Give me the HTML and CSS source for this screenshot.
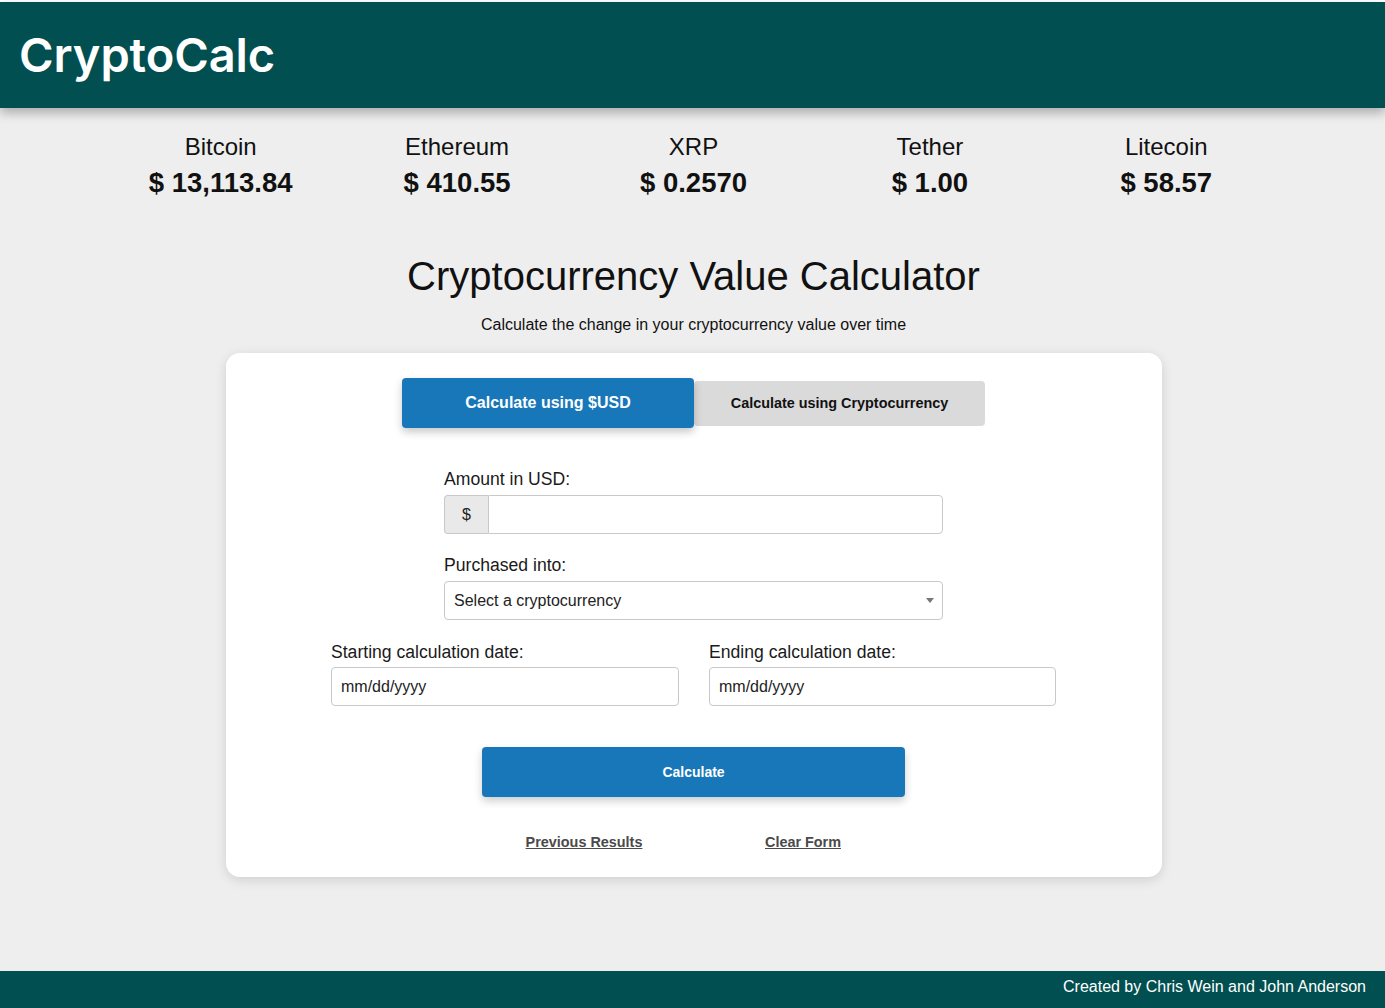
FILE: index.html
```html
<!DOCTYPE html>
<html lang="en">
<head>
<meta charset="utf-8">
<title>CryptoCalc</title>
<link rel="stylesheet" href="styles.css">
</head>
<body>
<div class="page">
  <header class="site-header">
    <h1 class="logo">CryptoCalc</h1>
  </header>

  <div class="content">
    <section class="ticker">
      <div class="coin"><div class="coin-name">Bitcoin</div><div class="coin-price">$ 13,113.84</div></div>
      <div class="coin"><div class="coin-name">Ethereum</div><div class="coin-price">$ 410.55</div></div>
      <div class="coin"><div class="coin-name">XRP</div><div class="coin-price">$ 0.2570</div></div>
      <div class="coin"><div class="coin-name">Tether</div><div class="coin-price">$ 1.00</div></div>
      <div class="coin"><div class="coin-name">Litecoin</div><div class="coin-price">$ 58.57</div></div>
    </section>

    <main class="main">
      <h2 class="title">Cryptocurrency Value Calculator</h2>
      <p class="subtitle">Calculate the change in your cryptocurrency value over time</p>

      <div class="card">
        <div class="tabs">
          <button class="tab tab-active">Calculate using $USD</button>
          <button class="tab tab-inactive">Calculate using Cryptocurrency</button>
        </div>

        <div class="form">
          <div class="field field-narrow">
            <label class="label">Amount in USD:</label>
            <div class="input-group">
              <span class="prefix">$</span>
              <input class="input input-joined" type="text">
            </div>
          </div>

          <div class="field field-narrow">
            <label class="label">Purchased into:</label>
            <div class="select-wrap">
              <select class="input select">
                <option>Select a cryptocurrency</option>
              </select>
            </div>
          </div>

          <div class="date-row">
            <div class="field">
              <label class="label label-date">Starting calculation date:</label>
              <input class="input" type="text" placeholder="mm/dd/yyyy">
            </div>
            <div class="field">
              <label class="label label-date">Ending calculation date:</label>
              <input class="input" type="text" placeholder="mm/dd/yyyy">
            </div>
          </div>
        </div>

        <button class="calc-btn">Calculate</button>

        <div class="links">
          <a class="link" href="#">Previous Results</a>
          <a class="link" href="#">Clear Form</a>
        </div>
      </div>
    </main>
  </div>

  <footer class="site-footer">Created by Chris Wein and John Anderson</footer>
</div>
</body>
</html>
```

FILE: styles.css
```css
* { box-sizing: border-box; }

html, body {
  margin: 0;
  padding: 0;
  background: #ffffff;
}

body {
  font-family: "Liberation Sans", Arial, sans-serif;
  color: #111;
}

.page {
  margin-top: 2px;
  min-height: calc(100vh - 2px);
  background: #eeeeee;
  display: flex;
  flex-direction: column;
}

.site-header {
  height: 106px;
  background: #014f50;
  display: flex;
  align-items: center;
  padding-left: 19px;
  box-shadow: 0 5px 10px rgba(0, 0, 0, 0.28);
  position: relative;
  z-index: 1;
}

.logo {
  margin: 0;
  font-family: Inter, "DejaVu Sans", sans-serif;
  font-weight: 600;
  font-size: 47px;
  line-height: 58px;
  color: #ffffff;
  letter-spacing: -0.1px;
}

.content {
  padding-left: 2px;
}

.ticker {
  width: 1182px;
  margin: 0 auto;
  padding-top: 25px;
  display: grid;
  grid-template-columns: repeat(5, 1fr);
  text-align: center;
}

.coin-name {
  font-size: 24px;
  line-height: 28px;
}

.coin-price {
  margin-top: 6px;
  font-size: 27.5px;
  line-height: 32px;
  font-weight: 700;
}

.main {
  display: flex;
  flex-direction: column;
  align-items: center;
}

.title {
  margin: 54px 0 0;
  font-size: 40px;
  line-height: 46px;
  font-weight: 400;
}

.subtitle {
  margin: 17px 0 0;
  font-size: 16px;
  line-height: 18px;
}

.card {
  margin-top: 19px;
  width: 936px;
  background: #ffffff;
  border-radius: 14px;
  box-shadow: 0 3px 12px rgba(0, 0, 0, 0.13);
  padding: 25px 0 27px;
  display: flex;
  flex-direction: column;
  align-items: center;
}

.tabs {
  display: flex;
  align-items: center;
}

.tab {
  border: none;
  font-family: "Liberation Sans", Arial, sans-serif;
  font-weight: 700;
  cursor: pointer;
  border-radius: 4px;
}

.tab-active {
  width: 292px;
  height: 50px;
  background: #1877b9;
  color: #ffffff;
  font-size: 16px;
  box-shadow: 0 4px 8px rgba(0, 0, 0, 0.22);
  position: relative;
  z-index: 1;
}

.tab-inactive {
  width: 291px;
  height: 45px;
  background: #dadada;
  color: #111;
  font-size: 14.4px;
}

.form {
  margin-top: 41px;
  display: flex;
  flex-direction: column;
  align-items: center;
}

.field {
  display: flex;
  flex-direction: column;
}

.field-narrow {
  width: 499px;
}

.field-narrow + .field-narrow {
  margin-top: 21px;
}

.date-row {
  margin-top: 22px;
  display: grid;
  grid-template-columns: 348px 347px;
  column-gap: 30px;
}

.label {
  font-size: 17.6px;
  line-height: 21px;
  color: #1a1a1a;
  margin-bottom: 5px;
}

.label-date {
  margin-bottom: 4px;
}

.input {
  height: 39px;
  width: 100%;
  border: 1px solid #c9c9c9;
  border-radius: 4px;
  padding: 0 9px;
  font-family: "Liberation Sans", Arial, sans-serif;
  font-size: 16px;
  color: #222;
  background: #ffffff;
  outline: none;
}

.input::placeholder {
  color: #222;
}

.input-group {
  display: flex;
  height: 39px;
}

.prefix {
  width: 44px;
  flex: none;
  display: flex;
  align-items: center;
  justify-content: center;
  background: #e9e9e9;
  border: 1px solid #c9c9c9;
  border-right: none;
  border-radius: 4px 0 0 4px;
  font-size: 16px;
  color: #222;
}

.input-joined {
  border-radius: 0 4px 4px 0;
}

.select-wrap {
  position: relative;
}

.select {
  appearance: none;
  -webkit-appearance: none;
  cursor: pointer;
}

.select-wrap::after {
  content: "";
  position: absolute;
  right: 9px;
  top: 17px;
  border-left: 4px solid transparent;
  border-right: 4px solid transparent;
  border-top: 5px solid #777;
  pointer-events: none;
}

.calc-btn {
  margin-top: 41px;
  width: 423px;
  height: 50px;
  border: none;
  border-radius: 4px;
  background: #1877b9;
  color: #ffffff;
  font-family: "Liberation Sans", Arial, sans-serif;
  font-size: 14px;
  font-weight: 700;
  box-shadow: 0 4px 8px rgba(0, 0, 0, 0.2);
  cursor: pointer;
}

.links {
  margin-top: 37px;
  display: grid;
  grid-template-columns: 219px 219px;
  text-align: center;
}

.link {
  font-size: 14.4px;
  line-height: 16px;
  font-weight: 700;
  color: #4a4a4a;
  text-decoration: underline;
}

.site-footer {
  margin-top: auto;
  height: 37px;
  background: #014f50;
  color: #ffffff;
  font-size: 16px;
  display: flex;
  align-items: center;
  justify-content: flex-end;
  padding: 0 19px 6px 0;
}
```
